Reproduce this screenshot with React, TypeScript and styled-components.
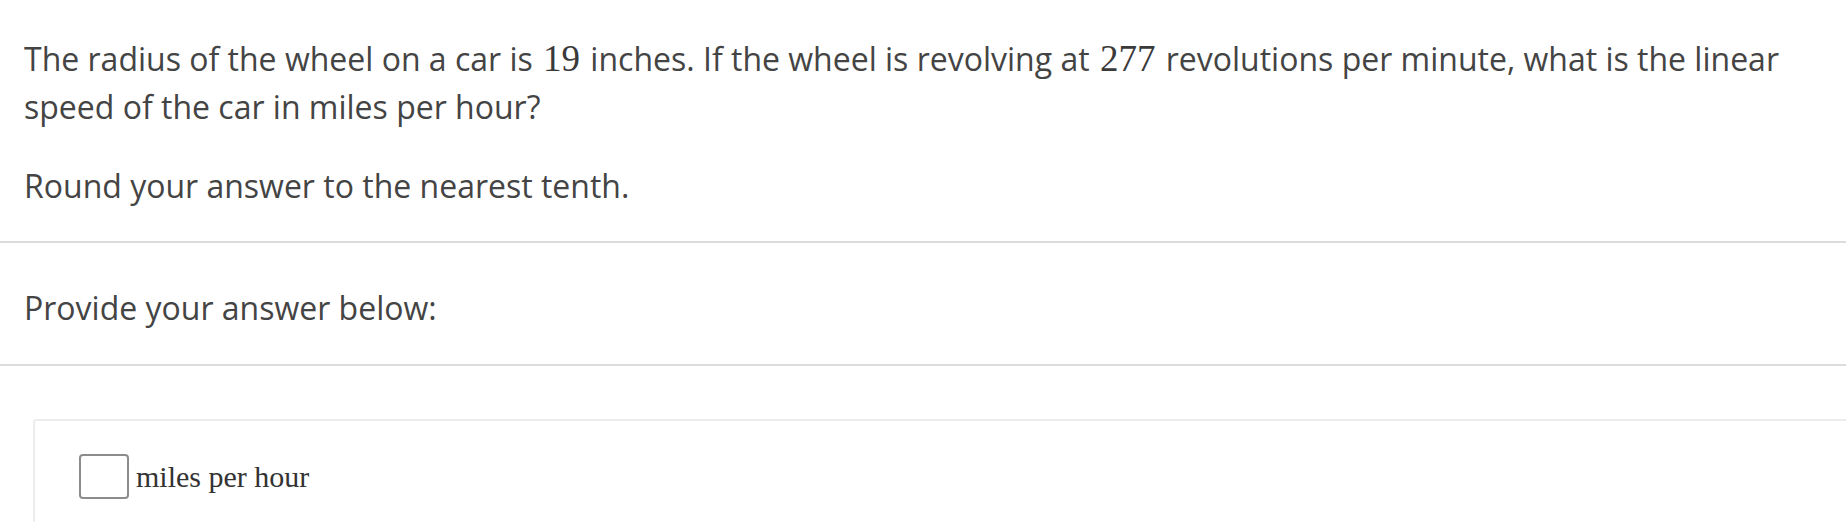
import React from 'react';
import styled, { createGlobalStyle } from 'styled-components';

const GlobalStyle = createGlobalStyle`
  html, body {
    margin: 0;
    padding: 0;
    background: #ffffff;
    overflow: hidden;
  }
  body {
    font-family: 'Open Sans', 'Noto Sans', sans-serif;
    color: #444444;
  }
`;

const Page = styled.div`
  width: 100%;
  overflow: hidden;
`;

const Section = styled.section<{ $top: number; $bottom: number }>`
  padding: ${(p) => p.$top}px 24px ${(p) => p.$bottom}px 24px;
  border-bottom: 2px solid #dcdcdc;
`;

const Paragraph = styled.p`
  margin: 0;
  font-size: 32px;
  line-height: 48px;
  & + & {
    margin-top: 31px;
  }
`;

const MathNum = styled.span`
  font-family: 'Liberation Serif', 'Times New Roman', serif;
  font-size: 37px;
  line-height: 1;
  color: #3a3a3a;
  margin: 0 2px;
`;

const Heading = styled.h2`
  margin: 0;
  font-size: 32px;
  font-weight: 400;
  line-height: 48px;
`;

const AnswerArea = styled.div`
  padding: 53px 0 0 33px;
`;

const AnswerCard = styled.div`
  margin-right: -60px;
  height: 200px;
  border: 2px solid #ececec;
  border-radius: 3px;
  padding: 33px 0 0 44px;
  box-sizing: border-box;
`;

const InputRow = styled.div`
  display: flex;
  align-items: center;
  gap: 7px;
`;

const AnswerInput = styled.input`
  width: 50px;
  height: 45px;
  box-sizing: border-box;
  border: 2px solid #8c8c8c;
  border-radius: 4px;
  background: #ffffff;
  outline: none;
  padding: 0 4px;
  font-size: 22px;
`;

const Unit = styled.span`
  font-family: 'Liberation Serif', 'Times New Roman', serif;
  font-size: 30px;
  color: #333333;
  line-height: 45px;
`;

const App: React.FC = () => {
  return (
    <Page>
      <GlobalStyle />
      <Section $top={35} $bottom={31}>
        <Paragraph>
          The radius of the wheel on a car is <MathNum>19</MathNum> inches. If the wheel is
          revolving at <MathNum>277</MathNum> revolutions per minute, what is the linear speed of
          the car in miles per hour?
        </Paragraph>
        <Paragraph>Round your answer to the nearest tenth.</Paragraph>
      </Section>
      <Section $top={41} $bottom={32}>
        <Heading>Provide your answer below:</Heading>
      </Section>
      <AnswerArea>
        <AnswerCard>
          <InputRow>
            <AnswerInput type="text" aria-label="answer" />
            <Unit>miles per hour</Unit>
          </InputRow>
        </AnswerCard>
      </AnswerArea>
    </Page>
  );
};

export default App;
